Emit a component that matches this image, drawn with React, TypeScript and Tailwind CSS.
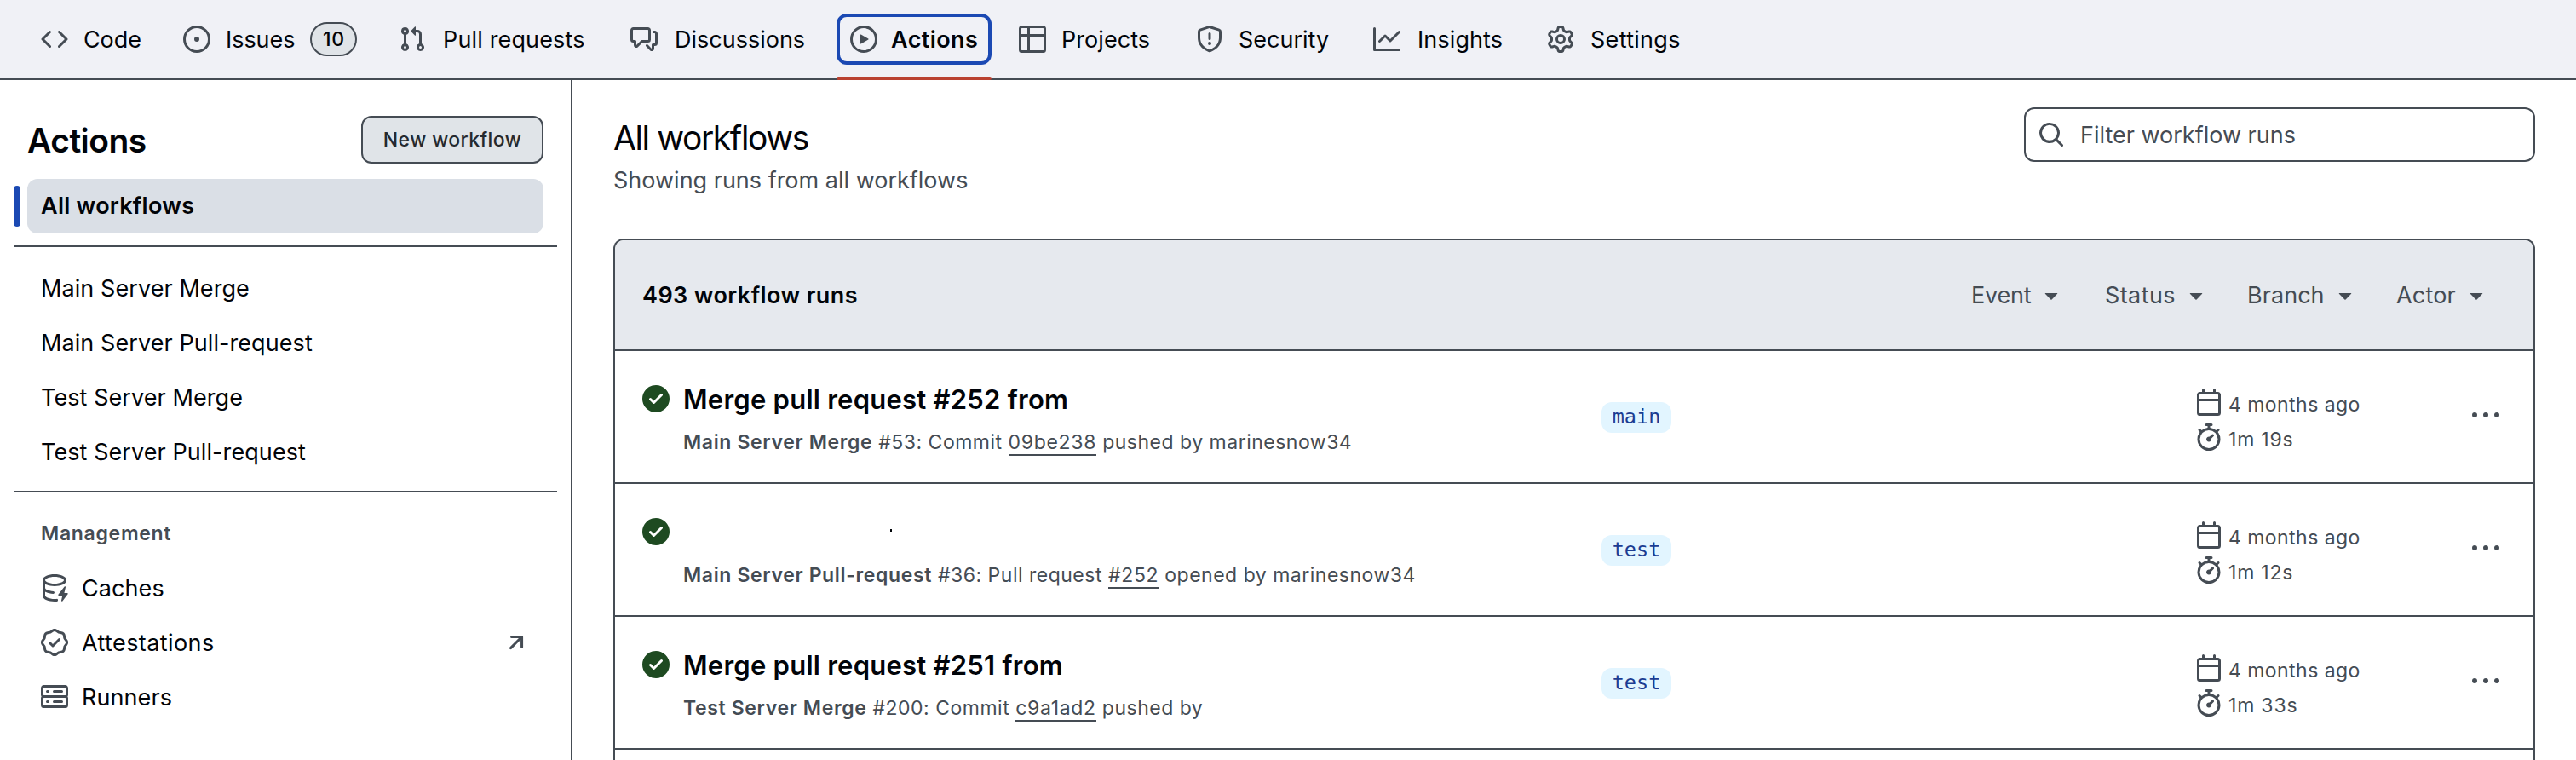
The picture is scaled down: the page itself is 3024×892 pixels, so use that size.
import type { ReactNode } from "react";

const ICONS = {
  code: "m11.28 3.22 4.25 4.25a.75.75 0 0 1 0 1.06l-4.25 4.25a.749.749 0 0 1-1.275-.326.749.749 0 0 1 .215-.734L13.94 8l-3.72-3.72a.749.749 0 0 1 .326-1.275.749.749 0 0 1 .734.215Zm-6.56 0a.751.751 0 0 1 1.042.018.751.751 0 0 1 .018 1.042L2.06 8l3.72 3.72a.749.749 0 0 1-.326 1.275.749.749 0 0 1-.734-.215L.47 8.53a.75.75 0 0 1 0-1.06Z",
  issue: "M8 9.5a1.5 1.5 0 1 0 0-3 1.5 1.5 0 0 0 0 3ZM8 0a8 8 0 1 1 0 16A8 8 0 0 1 8 0ZM1.5 8a6.5 6.5 0 1 0 13 0 6.5 6.5 0 0 0-13 0Z",
  pull: "M1.5 3.25a2.25 2.25 0 1 1 3 2.122v5.256a2.251 2.251 0 1 1-1.5 0V5.372A2.25 2.25 0 0 1 1.5 3.25Zm5.677-.177L9.573.677A.25.25 0 0 1 10 .854V2.5h1A2.5 2.5 0 0 1 13.5 5v5.628a2.251 2.251 0 1 1-1.5 0V5a1 1 0 0 0-1-1h-1v1.646a.25.25 0 0 1-.427.177L7.177 3.427a.25.25 0 0 1 0-.354ZM3.75 2.5a.75.75 0 1 0 0 1.5.75.75 0 0 0 0-1.5Zm0 9.5a.75.75 0 1 0 0 1.5.75.75 0 0 0 0-1.5Zm8.25.75a.75.75 0 1 0 1.5 0 .75.75 0 0 0-1.5 0Z",
  discussion: "M1.75 1h8.5c.966 0 1.75.784 1.75 1.75v5.5A1.75 1.75 0 0 1 10.25 10H7.061l-2.574 2.573A1.458 1.458 0 0 1 2 11.543V10h-.25A1.75 1.75 0 0 1 0 8.25v-5.5C0 1.784.784 1 1.75 1ZM1.5 2.75v5.5c0 .138.112.25.25.25h1a.75.75 0 0 1 .75.75v2.19l2.72-2.72a.749.749 0 0 1 .53-.22h3.5a.25.25 0 0 0 .25-.25v-5.5a.25.25 0 0 0-.25-.25h-8.5a.25.25 0 0 0-.25.25Zm13 2a.25.25 0 0 0-.25-.25h-.5a.75.75 0 0 1 0-1.5h.5c.966 0 1.75.784 1.75 1.75v5.5A1.75 1.75 0 0 1 14.25 12H14v1.543a1.458 1.458 0 0 1-2.487 1.03L9.22 12.28a.749.749 0 0 1 .326-1.275.749.749 0 0 1 .734.215l2.22 2.22v-2.19a.75.75 0 0 1 .75-.75h1a.25.25 0 0 0 .25-.25Z",
  play: "M8 0a8 8 0 1 1 0 16A8 8 0 0 1 8 0ZM1.5 8a6.5 6.5 0 1 0 13 0 6.5 6.5 0 0 0-13 0Zm4.879-2.773 4.264 2.559a.25.25 0 0 1 0 .428l-4.264 2.559A.25.25 0 0 1 6 10.559V5.442a.25.25 0 0 1 .379-.215Z",
  table: "M0 1.75C0 .784.784 0 1.75 0h12.5C15.216 0 16 .784 16 1.75v12.5A1.75 1.75 0 0 1 14.25 16H1.75A1.75 1.75 0 0 1 0 14.25ZM6.5 6.5v8h7.75a.25.25 0 0 0 .25-.25V6.5Zm8-1.5V1.75a.25.25 0 0 0-.25-.25H6.5V5Zm-13 1.5v7.75c0 .138.112.25.25.25H5v-8ZM5 5V1.5H1.75a.25.25 0 0 0-.25.25V5Z",
  shield: "M7.467.133a1.748 1.748 0 0 1 1.066 0l5.25 1.68A1.75 1.75 0 0 1 15 3.48V7c0 1.566-.32 3.182-1.303 4.682-.983 1.498-2.585 2.813-5.032 3.855a1.697 1.697 0 0 1-1.33 0c-2.447-1.042-4.049-2.357-5.032-3.855C1.32 10.182 1 8.566 1 7V3.48a1.755 1.755 0 0 1 1.217-1.667Zm.61 1.429a.25.25 0 0 0-.153 0l-5.25 1.68a.25.25 0 0 0-.174.238V7c0 1.358.275 2.666 1.057 3.86.784 1.194 2.121 2.34 4.366 3.297a.196.196 0 0 0 .154 0c2.245-.956 3.582-2.104 4.366-3.298C13.225 9.666 13.5 8.36 13.5 7V3.48a.251.251 0 0 0-.174-.237l-5.25-1.68ZM8.75 4.75v3a.75.75 0 0 1-1.5 0v-3a.75.75 0 0 1 1.5 0ZM9 10.5a1 1 0 1 1-2 0 1 1 0 0 1 2 0Z",
  graph: "M1.5 1.75V13.5h13.75a.75.75 0 0 1 0 1.5H.75a.75.75 0 0 1-.75-.75V1.75a.75.75 0 0 1 1.5 0Zm14.28 2.53-5.25 5.25a.75.75 0 0 1-1.06 0L7 7.06 4.28 9.78a.751.751 0 0 1-1.042-.018.751.751 0 0 1-.018-1.042l3.25-3.25a.75.75 0 0 1 1.06 0L10 7.94l4.72-4.72a.751.751 0 0 1 1.042.018.751.751 0 0 1 .018 1.042Z",
  gear: "M8 0a8.2 8.2 0 0 1 .701.031C9.444.095 9.99.645 10.16 1.29l.288 1.107c.018.066.079.158.212.224.231.114.454.243.668.386.123.082.233.09.299.071l1.103-.303c.644-.176 1.392.021 1.82.63.27.385.506.792.704 1.218.315.675.111 1.422-.364 1.891l-.814.806c-.049.048-.098.147-.088.294.016.257.016.515 0 .772-.01.147.038.246.088.294l.814.806c.475.469.679 1.216.364 1.891a7.977 7.977 0 0 1-.704 1.217c-.428.61-1.176.807-1.82.63l-1.102-.302c-.067-.019-.177-.011-.3.071a5.909 5.909 0 0 1-.668.386c-.133.066-.194.158-.211.224l-.29 1.106c-.168.646-.715 1.196-1.458 1.26a8.006 8.006 0 0 1-1.402 0c-.743-.064-1.289-.614-1.458-1.26l-.289-1.106c-.018-.066-.079-.158-.212-.224a5.738 5.738 0 0 1-.668-.386c-.123-.082-.233-.09-.299-.071l-1.103.303c-.644.176-1.392-.021-1.82-.63a8.12 8.12 0 0 1-.704-1.218c-.315-.675-.111-1.422.363-1.891l.815-.806c.05-.048.098-.147.088-.294a6.214 6.214 0 0 1 0-.772c.01-.147-.038-.246-.088-.294l-.815-.806C.635 6.045.431 5.298.746 4.623a7.92 7.92 0 0 1 .704-1.217c.428-.61 1.176-.807 1.82-.63l1.102.302c.067.019.177.011.3-.071.214-.143.437-.272.668-.386.133-.066.194-.158.211-.224l.29-1.106C6.009.645 6.556.095 7.299.03 7.53.01 7.764 0 8 0Zm-.571 1.525c-.036.003-.108.036-.137.146l-.289 1.105c-.147.561-.549.967-.998 1.189-.173.086-.34.183-.5.29-.417.278-.97.423-1.529.27l-1.103-.303c-.109-.03-.175.016-.195.045-.22.312-.412.644-.573.99-.014.031-.021.11.059.19l.815.806c.411.406.562.957.53 1.456a4.709 4.709 0 0 0 0 .582c.032.499-.119 1.05-.53 1.456l-.815.806c-.081.08-.073.159-.059.19.162.346.353.677.573.989.02.03.085.076.195.046l1.102-.303c.56-.153 1.113-.008 1.53.27.161.107.328.204.501.29.447.222.85.629.997 1.189l.289 1.105c.029.109.101.143.137.146a6.6 6.6 0 0 0 1.142 0c.036-.003.108-.036.137-.146l.289-1.105c.147-.561.549-.967.998-1.189.173-.086.34-.183.5-.29.417-.278.97-.423 1.529-.27l1.103.303c.109.029.175-.016.195-.045.22-.313.411-.644.573-.99.014-.031.021-.11-.059-.19l-.815-.806c-.411-.406-.562-.957-.53-1.456a4.709 4.709 0 0 0 0-.582c-.032-.499.119-1.05.53-1.456l.815-.806c.081-.08.073-.159.059-.19a6.464 6.464 0 0 0-.573-.989c-.02-.03-.085-.076-.195-.046l-1.102.303c-.56.153-1.113.008-1.53-.27a4.44 4.44 0 0 0-.501-.29c-.447-.222-.85-.629-.997-1.189l-.289-1.105c-.029-.11-.101-.143-.137-.146a6.6 6.6 0 0 0-1.142 0ZM11 8a3 3 0 1 1-6 0 3 3 0 0 1 6 0ZM9.5 8a1.5 1.5 0 1 0-3.001.001A1.5 1.5 0 0 0 9.5 8Z",
  cache: "M2.5 5.724V8c0 .248.238.7 1.169 1.159.874.43 2.144.745 3.62.822a.75.75 0 1 1-.078 1.498c-1.622-.085-3.102-.432-4.204-.975a5.565 5.565 0 0 1-.507-.28V12.5c0 .133.058.318.282.551.227.237.591.483 1.101.707 1.015.447 2.47.742 4.117.742.406 0 .802-.018 1.183-.052a.751.751 0 1 1 .134 1.494C8.89 15.98 8.45 16 8 16c-1.805 0-3.475-.32-4.721-.869-.623-.274-1.173-.619-1.579-1.041-.408-.425-.7-.964-.7-1.59v-9c0-.626.292-1.165.7-1.591.406-.42.956-.766 1.579-1.04C4.525.32 6.195 0 8 0c1.806 0 3.476.32 4.721.869.623.274 1.173.619 1.579 1.041.408.425.7.964.7 1.59 0 .626-.292 1.165-.7 1.591-.406.42-.956.766-1.578 1.04C11.476 6.68 9.805 7 8 7c-1.805 0-3.475-.32-4.721-.869a6.15 6.15 0 0 1-.779-.407Zm0-2.224c0 .133.058.318.282.551.227.237.591.483 1.101.707C4.898 5.205 6.353 5.5 8 5.5c1.646 0 3.101-.295 4.118-.742.508-.224.873-.471 1.1-.708.224-.232.282-.417.282-.55 0-.133-.058-.318-.282-.551-.227-.237-.591-.483-1.101-.707C11.102 1.795 9.647 1.5 8 1.5c-1.646 0-3.101.295-4.118.742-.508.224-.873.471-1.1.708-.224.232-.282.417-.282.55ZM14.49 7.582a.375.375 0 0 0-.66-.313l-3.625 4.625a.375.375 0 0 0 .295.606h2.127l-.619 2.922a.375.375 0 0 0 .666.304l3.125-4.125A.375.375 0 0 0 15.5 11h-1.778l.769-3.418Z",
  verified: "m9.585.52.929.68c.153.112.331.186.518.215l1.138.175a2.678 2.678 0 0 1 2.24 2.24l.174 1.139c.029.187.103.365.215.518l.68.928a2.677 2.677 0 0 1 0 3.17l-.68.928a1.174 1.174 0 0 0-.215.518l-.175 1.138a2.678 2.678 0 0 1-2.241 2.241l-1.138.175a1.17 1.17 0 0 0-.518.215l-.928.68a2.677 2.677 0 0 1-3.17 0l-.928-.68a1.174 1.174 0 0 0-.518-.215L3.83 14.41a2.678 2.678 0 0 1-2.24-2.24l-.175-1.138a1.17 1.17 0 0 0-.215-.518l-.68-.928a2.677 2.677 0 0 1 0-3.17l.68-.928c.112-.153.186-.331.215-.518l.175-1.14a2.678 2.678 0 0 1 2.24-2.24l1.139-.175c.187-.029.365-.103.518-.215l.928-.68a2.677 2.677 0 0 1 3.17 0ZM7.303 1.728l-.927.68a2.67 2.67 0 0 1-1.18.489l-1.137.174a1.179 1.179 0 0 0-.987.987l-.174 1.136a2.677 2.677 0 0 1-.489 1.18l-.68.928a1.18 1.18 0 0 0 0 1.394l.68.927c.256.348.424.753.489 1.18l.174 1.137c.078.509.478.909.987.987l1.136.174a2.67 2.67 0 0 1 1.18.489l.928.68c.414.305.979.305 1.394 0l.927-.68a2.67 2.67 0 0 1 1.18-.489l1.137-.174a1.18 1.18 0 0 0 .987-.987l.174-1.136a2.67 2.67 0 0 1 .489-1.18l.68-.928a1.176 1.176 0 0 0 0-1.394l-.68-.927a2.686 2.686 0 0 1-.489-1.18l-.174-1.137a1.179 1.179 0 0 0-.987-.987l-1.136-.174a2.677 2.677 0 0 1-1.18-.489l-.928-.68a1.176 1.176 0 0 0-1.394 0ZM11.28 6.78l-3.75 3.75a.75.75 0 0 1-1.06 0L4.72 8.78a.751.751 0 0 1 .018-1.042.751.751 0 0 1 1.042-.018L7 8.94l3.22-3.22a.751.751 0 0 1 1.042.018.751.751 0 0 1 .018 1.042Z",
  server: "M1.75 1h12.5c.966 0 1.75.784 1.75 1.75v4c0 .372-.116.717-.314 1 .198.283.314.628.314 1v4a1.75 1.75 0 0 1-1.75 1.75H1.75A1.75 1.75 0 0 1 0 12.75v-4c0-.358.109-.707.314-1a1.739 1.739 0 0 1-.314-1v-4C0 1.784.784 1 1.75 1ZM1.5 2.75v4c0 .138.112.25.25.25h12.5a.25.25 0 0 0 .25-.25v-4a.25.25 0 0 0-.25-.25H1.75a.25.25 0 0 0-.25.25Zm.25 5.75a.25.25 0 0 0-.25.25v4c0 .138.112.25.25.25h12.5a.25.25 0 0 0 .25-.25v-4a.25.25 0 0 0-.25-.25ZM7 4.75A.75.75 0 0 1 7.75 4h4.5a.75.75 0 0 1 0 1.5h-4.5A.75.75 0 0 1 7 4.75ZM7.75 10h4.5a.75.75 0 0 1 0 1.5h-4.5a.75.75 0 0 1 0-1.5ZM3 4.75A.75.75 0 0 1 3.75 4h.5a.75.75 0 0 1 0 1.5h-.5A.75.75 0 0 1 3 4.75ZM3.75 10h.5a.75.75 0 0 1 0 1.5h-.5a.75.75 0 0 1 0-1.5Z",
  arrow: "M4.53 4.75A.75.75 0 0 1 5.28 4h6.01a.75.75 0 0 1 .75.75v6.01a.75.75 0 0 1-1.5 0v-4.2l-5.26 5.261a.749.749 0 0 1-1.275-.326.749.749 0 0 1 .215-.734L9.48 5.5h-4.2a.75.75 0 0 1-.75-.75Z",
  search: "M10.68 11.74a6 6 0 0 1-7.922-8.982 6 6 0 0 1 8.982 7.922l3.04 3.04a.749.749 0 0 1-.326 1.275.749.749 0 0 1-.734-.215ZM11.5 7a4.499 4.499 0 1 0-8.997 0A4.499 4.499 0 0 0 11.5 7Z",
  triangle: "m4.427 7.427 3.396 3.396a.25.25 0 0 0 .354 0l3.396-3.396A.25.25 0 0 0 11.396 7H4.604a.25.25 0 0 0-.177.427Z",
  calendar: "M4.75 0a.75.75 0 0 1 .75.75V2h5V.75a.75.75 0 0 1 1.5 0V2h1.25c.966 0 1.75.784 1.75 1.75v10.5A1.75 1.75 0 0 1 13.25 16H2.75A1.75 1.75 0 0 1 1 14.25V3.75C1 2.784 1.784 2 2.75 2H4V.75A.75.75 0 0 1 4.75 0ZM2.5 7.5v6.75c0 .138.112.25.25.25h10.5a.25.25 0 0 0 .25-.25V7.5Zm10.75-4H2.75a.25.25 0 0 0-.25.25V6h11V3.75a.25.25 0 0 0-.25-.25Z",
  stopwatch: "M5.75.75A.75.75 0 0 1 6.5 0h3a.75.75 0 0 1 0 1.5h-.75v1l-.001.041a6.724 6.724 0 0 1 3.464 1.435l.007-.006.75-.75a.749.749 0 0 1 1.275.326.749.749 0 0 1-.215.734l-.75.75-.006.007a6.75 6.75 0 1 1-10.548 0L2.72 5.03l-.75-.75a.751.751 0 0 1 .018-1.042.751.751 0 0 1 1.042-.018l.75.75.007.006A6.72 6.72 0 0 1 7.25 2.541V1.5H6.5a.75.75 0 0 1-.75-.75ZM8 14.5a5.25 5.25 0 1 0-.001-10.501A5.25 5.25 0 0 0 8 14.5Zm.389-6.7 1.33-1.33a.75.75 0 1 1 1.061 1.06L9.45 8.861A1.503 1.503 0 0 1 8 10.75a1.499 1.499 0 1 1 .389-2.95Z",
  check: "M8 16A8 8 0 1 1 8 0a8 8 0 0 1 0 16Zm3.78-9.72a.751.751 0 0 0-.018-1.042.751.751 0 0 0-1.042-.018L6.75 9.19 5.28 7.72a.751.751 0 0 0-1.042.018.751.751 0 0 0-.018 1.042l2 2a.75.75 0 0 0 1.06 0Z",
  kebab: "M8 9a1.5 1.5 0 1 0 0-3 1.5 1.5 0 0 0 0 3ZM1.5 9a1.5 1.5 0 1 0 0-3 1.5 1.5 0 0 0 0 3Zm13 0a1.5 1.5 0 1 0 0-3 1.5 1.5 0 0 0 0 3Z",
};
type IconName = keyof typeof ICONS;

function Icon({ name, className = "fill-[#454c54]" }: { name: IconName; className?: string }) {
  return (
    <svg viewBox="0 0 16 16" className={`size-8 shrink-0 ${className}`} aria-hidden="true">
      <path d={ICONS[name]} />
    </svg>
  );
}

const TABS: { icon: IconName; label: string; width: string; text: string; count?: string }[] = [
  { icon: "code", label: "Code", width: "w-[167px]", text: "tracking-[-0.1px]" },
  { icon: "issue", label: "Issues", width: "w-[253px]", text: "tracking-[-0.05px]", count: "10" },
  { icon: "pull", label: "Pull requests", width: "w-[272px]", text: "pl-0.5 tracking-[0.15px]" },
  { icon: "discussion", label: "Discussions", width: "w-[258px]", text: "pl-0.5" },
  { icon: "play", label: "Actions", width: "w-[198px]", text: "" },
  { icon: "table", label: "Projects", width: "w-[208px]", text: "tracking-[0.05px]" },
  { icon: "shield", label: "Security", width: "w-[208px]", text: "" },
  { icon: "graph", label: "Insights", width: "w-[204px]", text: "pl-0.5 tracking-[0.1px]" },
  { icon: "gear", label: "Settings", width: "w-[200px]", text: "pl-px tracking-[0.3px]" },
];

function Nav() {
  return (
    <nav className="flex h-[94px] border-b-2 border-[#454c54] bg-[#f0f1f6] pl-8 text-[27px]">
      {TABS.map((tab) =>
        tab.label === "Actions" ? (
          <div key={tab.label} className={`relative h-[94px] shrink-0 pt-4 ${tab.width}`}>
            <div className="flex h-[60px] w-[182px] items-center gap-4 rounded-xl border-4 border-[#1b49b3] pl-3">
              <Icon name={tab.icon} />
              <span className="pt-0.5 font-semibold tracking-[0.4px]">{tab.label}</span>
            </div>
            <div className="absolute bottom-0 left-0 h-1 w-[182px] rounded-xs bg-[#b94130]" />
          </div>
        ) : (
          <div key={tab.label} className={`flex shrink-0 items-center gap-[18px] pl-4 ${tab.width}`}>
            <Icon name={tab.icon} />
            <span className={`pt-0.5 ${tab.text}`}>{tab.label}</span>
            {tab.count && (
              <span className="flex h-10 w-[55px] items-center justify-center rounded-full border-2 border-[#454c54] bg-[#e0e4e8] text-[23px] font-medium tracking-[0.8px]">
                {tab.count}
              </span>
            )}
          </div>
        ),
      )}
    </nav>
  );
}

function SideItem({ children }: { children: ReactNode }) {
  return <li className="flex h-16 items-center gap-4 px-4 text-[27px] tracking-[0.08px]">{children}</li>;
}

function Divider() {
  return <div className="-mx-4 h-0.5 bg-[#454c54]" />;
}

function Sidebar() {
  return (
    <aside className="w-[672px] shrink-0 border-r-2 border-[#454c54] px-8">
      <div className="flex h-[98px] items-end justify-between pt-[42px]">
        <h2 className="flex h-14 items-center pt-0.5 text-[39px] font-semibold tracking-[-0.55px]">Actions</h2>
        <button className="h-14 w-[214px] rounded-xl border-2 border-[#454c54] bg-[#e0e4e8] pt-px text-[23px] font-medium tracking-[0.4px] text-[#25292e]">
          New workflow
        </button>
      </div>
      <div className="-ml-4 flex items-center gap-2 pt-[18px] pb-3.5">
        <div className="h-12 w-2 rounded-full bg-[#1b49b3]" />
        <div className="flex h-16 flex-1 items-center rounded-xl bg-[#dadfe6] px-4 pt-px text-[27px] font-semibold tracking-[0.26px]">
          All workflows
        </div>
      </div>
      <Divider />
      <ul className="pt-4 pb-3.5">
        <SideItem><span className="pt-0.5">Main Server Merge</span></SideItem>
        <SideItem><span className="pt-0.5">Main Server Pull-request</span></SideItem>
        <SideItem><span className="pt-0.5">Test Server Merge</span></SideItem>
        <SideItem><span className="pt-0.5">Test Server Pull-request</span></SideItem>
      </ul>
      <Divider />
      <h3 className="flex h-20 items-center px-4 pt-4 text-[23px] font-semibold tracking-[0.7px] text-[#454c54]">
        Management
      </h3>
      <ul>
        <SideItem>
          <Icon name="cache" />
          <span className="pt-0.5">Caches</span>
        </SideItem>
        <SideItem>
          <Icon name="verified" />
          <span className="flex-1 pt-0.5 tracking-[0.4px]">Attestations</span>
          <Icon name="arrow" />
        </SideItem>
        <SideItem>
          <Icon name="server" />
          <span className="pt-0.5">Runners</span>
        </SideItem>
      </ul>
    </aside>
  );
}

const FILTERS = [
  { label: "Event", width: "w-[157px]", text: "tracking-[-0.2px]" },
  { label: "Status", width: "w-[167px]", text: "tracking-[0.4px]" },
  { label: "Branch", width: "w-[175px]", text: "tracking-[0.05px]" },
  { label: "Actor", width: "w-[129px]", text: "tracking-[0.2px]" },
];

const RUNS = [
  {
    title: "Merge pull request #252 from",
    workflow: "Main Server Merge",
    before: " #53: Commit ",
    link: "09be238",
    after: " pushed by marinesnow34",
    branch: "main",
    time: "1m 19s",
  },
  {
    title: "",
    workflow: "Main Server Pull-request",
    before: " #36: Pull request ",
    link: "#252",
    after: " opened by marinesnow34",
    branch: "test",
    time: "1m 12s",
  },
  {
    title: "Merge pull request #251 from",
    workflow: "Test Server Merge",
    before: " #200: Commit ",
    link: "c9a1ad2",
    after: " pushed by",
    branch: "test",
    time: "1m 33s",
  },
];

function RunRow({ run }: { run: (typeof RUNS)[number] }) {
  return (
    <div className="flex h-[156px] shrink-0 border-b-2 border-[#454c54] pl-8">
      <div className="flex w-[1126px] gap-4 pt-10">
        <Icon name="check" className="fill-[#1e4a21]" />
        <div>
          <div className="h-[37px] text-[31px] leading-[34px] font-semibold tracking-[0.25px]">
            {run.title || (
              <div className="pt-[13px] pl-[243px]">
                <div className="h-[3px] w-0.5 bg-[#010409]" />
              </div>
            )}
          </div>
          <div className="mt-3 text-[23px] leading-9 tracking-[0.5px] whitespace-pre text-[#454c54]">
            <span className="font-semibold tracking-[0.64px]">{run.workflow}</span>
            {run.before}
            <span className="inline-block h-[34px] border-b-2 border-[#454c54] tracking-[0.7px]">{run.link}</span>
            {run.after}
          </div>
        </div>
      </div>
      <div className="w-[697px] pt-[60px]">
        <span className="flex h-9 w-[82px] items-center justify-center rounded-xl bg-[#e2f5ff] font-['DejaVu_Sans_Mono',monospace] text-[23.5px] text-[#1b3c92]">
          {run.branch}
        </span>
      </div>
      <div className="w-[325px] pt-11 text-[23px] tracking-[0.45px] text-[#454c54]">
        <div className="flex h-[41px] items-start gap-[7px]">
          <Icon name="calendar" />
          <span className="pt-[3px] leading-8">4 months ago</span>
        </div>
        <div className="flex items-start gap-[7px]">
          <Icon name="stopwatch" />
          <span className="pt-[3px] leading-8 tracking-[0.8px]">{run.time}</span>
        </div>
      </div>
      <div className="pt-[60px]">
        <Icon name="kebab" />
      </div>
    </div>
  );
}

export default function App() {
  return (
    <div className="flex h-[892px] w-[3024px] flex-col overflow-hidden bg-white font-['Inter',sans-serif] text-[#010409]">
      <Nav />
      <div className="flex min-h-0 flex-1">
        <Sidebar />
        <main className="flex min-w-0 flex-1 flex-col px-12">
          <header className="flex h-[186px] shrink-0 justify-between pt-8">
            <div className="pt-2">
              <h1 className="h-[58px] text-[39px] leading-[56px] tracking-[-1.4px]">All workflows</h1>
              <p className="text-[27px] leading-10 text-[#454c54]">Showing runs from all workflows</p>
            </div>
            <div className="flex h-16 w-[600px] items-center gap-[18px] rounded-xl border-2 border-[#454c54] pl-3.5 text-[27px] text-[#454c54]">
              <Icon name="search" />
              <span className="pt-0.5">Filter workflow runs</span>
            </div>
          </header>
          <section className="flex min-h-0 flex-1 flex-col overflow-hidden rounded-t-xl border-2 border-b-0 border-[#454c54]">
            <div className="flex h-[130px] shrink-0 items-center justify-between border-b-2 border-[#454c54] bg-[#e6e9ee] pl-8 text-[27px]">
              <span className="pt-0.5 font-semibold tracking-[0.4px]">493 workflow runs</span>
              <div className="flex text-[#454c54]">
                {FILTERS.map((filter) => (
                  <div key={filter.label} className={`flex items-center gap-2 ${filter.width}`}>
                    <span className={`pt-0.5 ${filter.text}`}>{filter.label}</span>
                    <Icon name="triangle" />
                  </div>
                ))}
                <div className="w-8" />
              </div>
            </div>
            {RUNS.map((run) => (
              <RunRow key={run.link} run={run} />
            ))}
          </section>
        </main>
      </div>
    </div>
  );
}
